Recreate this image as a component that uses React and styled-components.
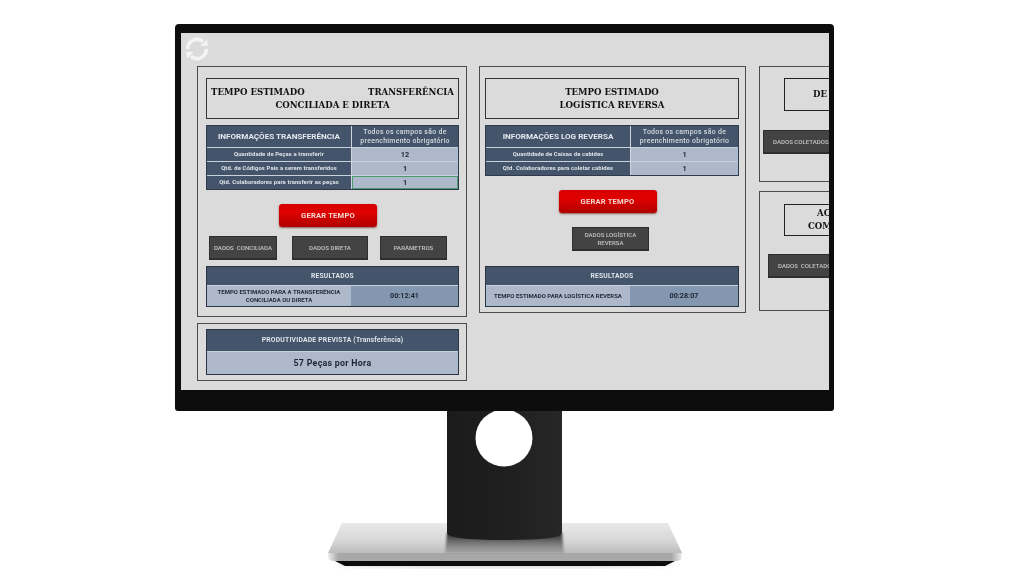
import React from "react";
import styled, {createGlobalStyle} from "styled-components";

const dinFont = `Roboto, "Liberation Sans", sans-serif`;
const titleFont = `"DejaVu Serif", "Liberation Serif", serif`;

const GlobalStyle = createGlobalStyle`
    html, body {
        margin: 0;
        padding: 0;
        background: #fff;
        overflow: hidden;
    }
`

function RefreshIcon() {
    return <svg width="26" height="26" viewBox="0 0 26 26" fill="none" stroke="#f4f4f4" strokeWidth="3.6">
        <path d="M3.5 13 A9.5 9.5 0 0 1 19 5.6" />
        <path d="M22.5 13 A9.5 9.5 0 0 1 7 20.4" />
        <path d="M16 10 L24 10 L23.2 3.5 Z" fill="#f4f4f4" stroke="none" />
        <path d="M10 16 L2 16 L2.8 22.5 Z" fill="#f4f4f4" stroke="none" />
    </svg>
}

function MonitorStand() {
    return <StandSvg width="360" height="160" viewBox="0 0 360 160">
        <defs>
            <linearGradient id="baseTop" x1="0" y1="0" x2="0" y2="1">
                <stop offset="0" stopColor="#e9e9e9" />
                <stop offset="0.6" stopColor="#d6d6d6" />
                <stop offset="1" stopColor="#bcbcbc" />
            </linearGradient>
            <linearGradient id="baseEdge" x1="0" y1="0" x2="1" y2="0">
                <stop offset="0" stopColor="#efefef" />
                <stop offset="0.03" stopColor="#a8a8a8" />
                <stop offset="0.97" stopColor="#a8a8a8" />
                <stop offset="1" stopColor="#efefef" />
            </linearGradient>
            <linearGradient id="neck" x1="0" y1="0" x2="1" y2="0">
                <stop offset="0" stopColor="#1b1b1b" />
                <stop offset="0.5" stopColor="#1f1f1f" />
                <stop offset="1" stopColor="#272727" />
            </linearGradient>
            <linearGradient id="neckShadow" x1="0" y1="0" x2="0" y2="1">
                <stop offset="0" stopColor="#222" />
                <stop offset="1" stopColor="#777" stopOpacity="0.4" />
            </linearGradient>
            <filter id="soft"><feGaussianBlur stdDeviation="2.5" /></filter>
            <filter id="softer"><feGaussianBlur stdDeviation="1" /></filter>
        </defs>
        <ellipse cx="180" cy="153" rx="170" ry="3.5" fill="#000" opacity="0.18" filter="url(#soft)" />
        <path d="M17 112 L343 112 L357 142 L3 142 Z" fill="url(#baseTop)" />
        <path d="M10 150 L350 150 L340 155 L20 155 Z" fill="#0c0c0c" />
        <path d="M3 142 L357 142 Q358 150 352 150 L8 150 Q2 150 3 142 Z" fill="url(#baseEdge)" />
        <path d="M122 122 L237 122 L239 142 L120 142 Z" fill="url(#neckShadow)" filter="url(#softer)" />
        <path d="M122 0 L237 0 L237 122 Q237 129 180 129 Q122 129 122 122 Z" fill="url(#neck)" />
        <circle cx="179" cy="27" r="28.5" fill="#fff" />
    </StandSvg>
}

function InfoTable(props) {
    return <Table>
        <TableHead>
            <HeadTitle>{props.title}</HeadTitle>
            <HeadNote>Todos os campos são de<br />preenchimento obrigatório</HeadNote>
        </TableHead>
        {props.rows.map(row => <TableRow key={row.label}>
            <RowLabel>{row.label}</RowLabel>
            <RowValue selected={row.selected}>{row.value}</RowValue>
        </TableRow>)}
    </Table>
}

function Results(props) {
    return <ResultBox>
        <ResultHead>RESULTADOS</ResultHead>
        <ResultRow>
            <ResultLabel>{props.label}</ResultLabel>
            <ResultValue>{props.value}</ResultValue>
        </ResultRow>
    </ResultBox>
}

export default function App() {
    return <Page>
        <GlobalStyle />
        <Monitor>
            <Screen>
                <TopBar><RefreshIcon /></TopBar>
                <Columns>
                    <Column>
                        <Panel height="251px" padTop="11px">
                            <TitleBox>
                                <TitleSplit><span>TEMPO ESTIMADO</span><span>TRANSFERÊNCIA</span></TitleSplit>
                                CONCILIADA E DIRETA
                            </TitleBox>
                            <InfoTable title="INFORMAÇÕES TRANSFERÊNCIA" rows={[
                                {label: "Quantidade de Peças a transferir", value: "12"},
                                {label: "Qtd. de Códigos Pais a serem transferidos", value: "1"},
                                {label: "Qtd. Colaboradores para transferir as peças", value: "1", selected: true},
                            ]} />
                            <RedRow><RedButton>GERAR TEMPO</RedButton></RedRow>
                            <ButtonRow gap="9px" indent="3px">
                                <DarkButton width="68px">DADOS&nbsp; CONCILIADA</DarkButton>
                                <DarkButton width="76px" left="15px">DADOS DIRETA</DarkButton>
                                <DarkButton width="67px" left="12px">PARÂMETROS</DarkButton>
                            </ButtonRow>
                            <Results label={<>TEMPO ESTIMADO PARA A TRANSFERÊNCIA<br />CONCILIADA OU DIRETA</>} value="00:12:41" />
                        </Panel>
                        <Panel height="58px" padTop="5px">
                            <ForecastBox>
                                <ForecastHead>PRODUTIVIDADE PREVISTA (Transferência)</ForecastHead>
                                <ForecastValue>57 Peças por Hora</ForecastValue>
                            </ForecastBox>
                        </Panel>
                    </Column>
                    <Column>
                        <Panel height="247px" padTop="11px" wide>
                            <TitleBox>TEMPO ESTIMADO<br />LOGÍSTICA REVERSA</TitleBox>
                            <InfoTable title="INFORMAÇÕES LOG REVERSA" rows={[
                                {label: "Quantidade de Caixas de cabides", value: "1"},
                                {label: "Qtd. Colaboradores para coletar cabides", value: "1"},
                            ]} />
                            <RedRow><RedButton>GERAR TEMPO</RedButton></RedRow>
                            <ButtonRow gap="14px" indent="87px"><DarkButton width="77px">DADOS LOGÍSTICA<br />REVERSA</DarkButton></ButtonRow>
                            <ResultSpacer />
                            <Results label="TEMPO ESTIMADO PARA LOGÍSTICA REVERSA" value="00:28:07" />
                        </Panel>
                    </Column>
                    <SideColumn>
                        <SidePanel height="116px">
                            <SideTitle height="33px" top="11px" padTop="9px">
                                <SideLine indent="28px">DE</SideLine>
                            </SideTitle>
                            <SideButton left="3px" top="19px">DADOS COLETADOS</SideButton>
                        </SidePanel>
                        <SidePanel height="120px">
                            <SideTitle height="32px" top="12px" padTop="2px">
                                <SideLine indent="32px">AC</SideLine>
                                <SideLine indent="23px">COM</SideLine>
                            </SideTitle>
                            <SideButton left="8px" top="18px">DADOS&nbsp; COLETADOS</SideButton>
                        </SidePanel>
                    </SideColumn>
                </Columns>
            </Screen>
        </Monitor>
        <MonitorStand />
    </Page>
}

const Page = styled.div`
    width: 1024px;
    height: 573px;
    box-sizing: border-box;
    padding: 24px 0 0 175px;
    background: #fff;
    overflow: hidden;
`

const Monitor = styled.div`
    width: 659px;
    height: 387px;
    box-sizing: border-box;
    padding: 9px 5px 21px 6px;
    background: #0d0d0d;
    border-radius: 4px 4px 3px 3px;
`

const Screen = styled.div`
    height: 100%;
    background: #dbdbdb;
    overflow: hidden;
    filter: blur(0.4px);
`

const TopBar = styled.div`
    display: flex;
    height: 33px;
    box-sizing: border-box;
    padding: 3px 0 0 3px;
`

const Columns = styled.div`
    display: flex;
    width: 900px;
    padding-left: 16px;
    gap: 12px;
`

const Column = styled.div`
    display: flex;
    flex-direction: column;
    gap: 6px;
`

const SideColumn = styled(Column)`
    gap: 9px;
    margin-left: 1px;
`

const Panel = styled.div`
    display: flex;
    flex-direction: column;
    width: ${props => props.wide ? "267px" : "270px"};
    height: ${props => props.height};
    box-sizing: border-box;
    padding: ${props => props.padTop} ${props => props.wide ? "6px" : "7px"} 0 ${props => props.wide ? "5px" : "8px"};
    border: 1px solid #4a4a4a;
`

const SidePanel = styled.div`
    display: flex;
    flex-direction: column;
    align-items: flex-start;
    width: 260px;
    height: ${props => props.height};
    box-sizing: border-box;
    border: 1px solid #4a4a4a;
`

const TitleBox = styled.div`
    height: 41px;
    box-sizing: border-box;
    padding: 7px 4px 0;
    border: 1px solid #333;
    font: bold 8.6px/13px ${titleFont};
    color: #111;
    text-align: center;
`

const TitleSplit = styled.div`
    display: flex;
    justify-content: space-between;
`

const SideTitle = styled.div`
    width: 220px;
    height: ${props => props.height};
    box-sizing: border-box;
    margin: ${props => props.top} 0 0 24px;
    padding-top: ${props => props.padTop};
    border: 1px solid #222;
    font: bold 8.6px/13px ${titleFont};
    color: #111;
`

const SideLine = styled.div`
    padding-left: ${props => props.indent};
`

const Table = styled.div`
    margin-top: 6px;
    border: 1px solid #2f3b4c;
    background: #44546a;
`

const TableHead = styled.div`
    display: flex;
    height: 21px;
`

const HeadTitle = styled.div`
    display: flex;
    align-items: center;
    justify-content: center;
    width: 144px;
    font: 700 8.1px/1 ${dinFont};
    color: #e4e8ee;
    white-space: nowrap;
`

const HeadNote = styled.div`
    flex: 1;
    border-left: 1px solid #cfd6df;
    font: 500 6.9px/9px ${dinFont};
    letter-spacing: 0.3px;
    color: #d5dbe3;
    text-align: center;
    padding-top: 2px;
    white-space: nowrap;
`

const TableRow = styled.div`
    display: flex;
    height: 13px;
    border-top: 1px solid #c9d1dc;
`

const RowLabel = styled.div`
    display: flex;
    align-items: center;
    justify-content: center;
    width: 144px;
    font: 700 5.9px/1 ${dinFont};
    letter-spacing: 0.1px;
    color: #dfe4ea;
    white-space: nowrap;
`

const RowValue = styled.div`
    flex: 1;
    display: flex;
    align-items: center;
    justify-content: center;
    box-sizing: border-box;
    background: #adb9ca;
    border-left: 1px solid #cfd6df;
    box-shadow: ${props => props.selected ? "inset 0 0 0 1px #4a9a6a" : "none"};
    font: 700 7.4px/1 ${dinFont};
    color: #222b36;
`

const RedRow = styled.div`
    display: flex;
    justify-content: center;
    margin-top: 14px;
    padding-right: 9px;
`

const RedButton = styled.div`
    display: flex;
    align-items: center;
    justify-content: center;
    width: 98px;
    height: 23px;
    border-radius: 3px;
    background: linear-gradient(#d60000, #e00000 35%, #b00000);
    box-shadow: 0 1px 2px rgba(90, 0, 0, 0.6);
    font: 700 7.6px/1 ${dinFont};
    letter-spacing: 0.2px;
    color: #f3d6d0;
`

const ButtonRow = styled.div`
    display: flex;
    margin-top: ${props => props.gap};
    padding-left: ${props => props.indent};
    height: 24px;
`

const DarkButton = styled.div`
    display: flex;
    align-items: center;
    justify-content: center;
    width: ${props => props.width};
    margin-left: ${props => props.left || 0};
    box-sizing: border-box;
    background: #434343;
    border: 1px solid #2e2e2e;
    border-bottom-width: 2px;
    font: 500 6.1px/7.5px ${dinFont};
    color: #c4c4c4;
    text-align: center;
    white-space: nowrap;
`

const SideButton = styled(DarkButton)`
    width: 120px;
    height: 24px;
    flex: none;
    justify-content: flex-start;
    padding-left: 9px;
    margin-top: ${props => props.top};
    margin-left: ${props => props.left};
`

const ResultSpacer = styled.div`
    height: 9px;
`

const ResultBox = styled.div`
    margin-top: 6px;
    border: 1px solid #2a3442;
`

const ResultHead = styled.div`
    display: flex;
    align-items: center;
    justify-content: center;
    height: 18px;
    background: #44546a;
    border-bottom: 1px solid #c9d1dc;
    font: 700 6.7px/1 ${dinFont};
    letter-spacing: 0.2px;
    color: #dfe4ea;
`

const ResultRow = styled.div`
    display: flex;
    height: 20px;
`

const ResultLabel = styled.div`
    display: flex;
    align-items: center;
    justify-content: center;
    width: 144px;
    background: #adb9ca;
    font: 700 6px/8px ${dinFont};
    color: #242c38;
    text-align: center;
    white-space: nowrap;
`

const ResultValue = styled.div`
    flex: 1;
    display: flex;
    align-items: center;
    justify-content: center;
    background: #8497b0;
    font: 700 7.2px/1 ${dinFont};
    color: #1d2530;
`

const ForecastBox = styled.div`
    height: 46px;
    box-sizing: border-box;
    border: 1px solid #2a3442;
    display: flex;
    flex-direction: column;
`

const ForecastHead = styled.div`
    display: flex;
    align-items: center;
    justify-content: center;
    height: 21px;
    background: #44546a;
    border-bottom: 1px solid #c9d1dc;
    font: 700 6.8px/1 ${dinFont};
    letter-spacing: 0.2px;
    color: #dfe4ea;
`

const ForecastValue = styled.div`
    flex: 1;
    display: flex;
    align-items: center;
    justify-content: center;
    background: #adb9ca;
    font: 700 8.8px/1 ${dinFont};
    letter-spacing: 0.3px;
    color: #1d2530;
`

const StandSvg = styled.svg`
    display: block;
    margin-left: 150px;
`
